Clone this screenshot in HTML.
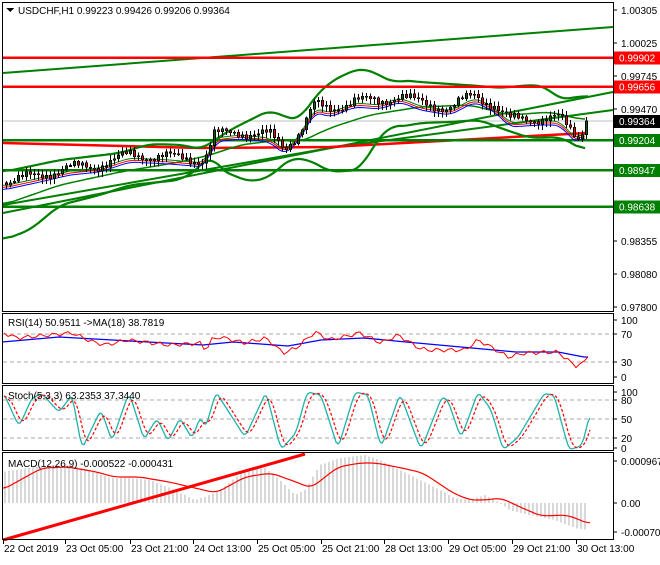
<!DOCTYPE html>
<html><head><meta charset="utf-8">
<style>
body{margin:0;background:#fff;width:660px;height:560px;overflow:hidden;font-family:"Liberation Sans",sans-serif;}
svg text{font-family:"Liberation Sans",sans-serif;font-size:10px;}
</style></head><body>
<svg id="s" width="660" height="560" xmlns="http://www.w3.org/2000/svg" shape-rendering="crispEdges">
<rect width="660" height="560" fill="#fff"/>
<g id="main"></g>
<g fill="none" stroke="#000" stroke-width="1">
<rect x="2.5" y="2.5" width="611" height="309"/>
<rect x="2.5" y="313.5" width="611" height="70"/>
<rect x="2.5" y="385.5" width="611" height="65"/>
<rect x="2.5" y="452.5" width="611" height="87"/>
</g>
<text x="18" y="14" fill="#000">USDCHF,H1  0.99223 0.99426 0.99206 0.99364</text>
<polygon points="6,8 14,8 10,12" fill="#000"/>
<text x="8" y="326">RSI(14) 50.9511  -&gt;MA(18) 38.7819</text>
<text x="8" y="399">Stoch(5,3,3) 63.2353 37.3440</text>
<text x="8" y="467">MACD(12,26,9) -0.000522 -0.000431</text>
<g id="axis"></g>
</svg>
<script>
const NS="http://www.w3.org/2000/svg";
const M=document.getElementById('main'),A=document.getElementById('axis');
function el(p,tag,at){const e=document.createElementNS(NS,tag);for(const k in at)e.setAttribute(k,at[k]);p.appendChild(e);return e;}
function interp(pts,x){if(x<=pts[0][0])return pts[0][1];for(let i=1;i<pts.length;i++){if(x<=pts[i][0]){const a=pts[i-1],b=pts[i];return a[1]+(b[1]-a[1])*(x-a[0])/(b[0]-a[0]);}}return pts[pts.length-1][1];}
function line(pts,st,w,extra){let d=pts.map((p,i)=>(i?'L':'M')+p[0]+','+p[1]).join('');const a={d:d,fill:'none',stroke:st,'stroke-width':w,'shape-rendering':'auto'};Object.assign(a,extra||{});return el(M,'path',a);}
function smooth(pts,step){const r=[];for(let x=pts[0][0];x<=pts[pts.length-1][0];x+=step)r.push([x,+interp(pts,x).toFixed(1)]);return r;}
function soft(pts,step,k){const s=smooth(pts,step);return s.map((p,i)=>{let t=0,n=0;for(let j=i-k;j<=i+k;j++)if(j>=0&&j<s.length){t+=s[j][1];n++;}return [p[0],+(t/n).toFixed(1)];});}
[[334],[362],[400],[419],[438]].forEach(v=>el(M,'line',{x1:3,x2:613,y1:v[0],y2:v[0],stroke:'#aaa','stroke-dasharray':'4,3'}));
el(M,'line',{x1:3,x2:613,y1:121,y2:121,stroke:'#c0c0c0'});
const P=[[3,183],[40,175],[70,168],[100,165],[130,155],[170,157],[205,160],[215,135],[240,132],[270,135],[285,148],[300,132],[315,105],[330,110],[355,100],[380,102],[400,95],[420,103],[450,108],[475,95],[495,105],[510,120],[540,118],[560,118],[570,130],[580,138],[587,120]];
const UP=[[3,172],[60,160],[120,153],[150,144],[185,145],[200,150],[215,140],[230,130],[270,110],[285,117],[300,120],[312,100],[330,82],[350,72],[362,68],[380,75],[395,84],[400,80],[420,82],[450,84],[480,86],[500,88],[530,85],[545,86],[560,100],[575,97],[590,96]];
const LO=[[3,240],[30,230],[60,205],[100,195],[130,185],[180,180],[200,168],[210,152],[220,170],[250,182],[270,177],[290,158],[310,160],[330,172],[360,170],[372,148],[390,125],[400,127],[420,123],[450,122],[480,120],[500,128],[530,138],[560,137],[575,145],[587,152]];
const midPts=soft([[3,205],[60,185],[120,172],[180,162],[210,155],[240,145],[280,140],[300,142],[330,128],[370,115],[420,107],[470,105],[510,115],[550,112],[575,118],[587,120]],3,3);
line([[3,73],[613,27]],'#008000',2);
line([[3,213],[613,92]],'#008000',2);
line([[3,205],[330,148],[613,110]],'#008000',2);
line([[3,143],[200,148],[330,147],[587,133]],'#ff0000',2.5);
line(soft(UP,3,3),'#008000',2.2);line(soft(LO,3,3),'#008000',2.2);line(midPts,'#008000',1.5);
[[57.5,'#ff0000'],[86.5,'#ff0000'],[140,'#008000'],[170,'#008000'],[206.5,'#008000']].forEach(l=>el(M,'line',{x1:3,x2:613,y1:l[0],y2:l[0],stroke:l[1],'stroke-width':2.5}));
const ema=soft(P,3,2).map(p=>[p[0],p[1]+4]);
line(ema.map(p=>[p[0],p[1]-1]),'#008000',1);line(ema.map(p=>[p[0],p[1]+1]),'#ff0000',1);line(ema.map(p=>[p[0],p[1]+3]),'#0000ff',1);
let prev=interp(P,3);
for(let x=5;x<=587;x+=4){
 let c=interp(P,x+2)+Math.sin(x*1.7)*4.5+Math.cos(x*0.9)*2;
 if(x>=583)c=121;
 const o=prev;prev=c;
 const hi=Math.min(o,c)-1-Math.abs(Math.sin(x*3.1))*4,lo=Math.max(o,c)+1+Math.abs(Math.cos(x*2.3))*5;
 const top=Math.min(o,c),h=Math.max(Math.abs(c-o),1);
 el(M,'line',{x1:x+1.5,x2:x+1.5,y1:hi,y2:lo,stroke:'#000'});
 el(M,'rect',{x:x+0.5,y:top,width:2,height:h,fill:c<o?'#006400':'#ff0000',stroke:'#000','stroke-width':0.6});
}
const RSIr=[[4,333],[17,338],[38,336],[72,333],[93,342],[106,345],[127,340],[169,345],[203,343],[205,353],[211,340],[220,337],[245,343],[266,338],[283,353],[296,348],[315,332],[330,340],[360,333],[381,343],[398,335],[419,348],[427,350],[465,350],[478,340],[491,347],[508,357],[525,353],[558,352],[575,366],[586,362],[590,349]];
const RSIr2=smooth(RSIr,4).map((p,i)=>[p[0],p[1]+Math.sin(i*1.9)*2]);
line([[2,342],[59,337],[148,342],[203,345],[233,342],[288,346],[321,340],[364,338],[406,342],[461,347],[516,352],[558,352],[584,357],[588,357]],'#0000ff',1.3);
line(RSIr2,'#ff0000',1);
const ST=[[4,97],[19,40],[32,90],[42,97],[59,65],[72,95],[82,2],[101,70],[112,15],[129,100],[144,18],[157,55],[168,15],[180,55],[192,20],[201,60],[205,35],[216,100],[245,22],[266,100],[281,0],[296,30],[307,100],[321,95],[338,3],[355,100],[368,95],[381,3],[400,97],[421,0],[442,92],[448,85],[461,20],[478,100],[491,70],[503,0],[518,22],[544,97],[554,95],[569,0],[582,8],[590,62]];
const sY=v=>450-v*0.58;
const st=soft(ST,2,1);
line(st.map(p=>[p[0],sY(p[1])]),'#20b2aa',1.3);
const sig=[];for(let i=0;i<st.length;i++){let s=0,n=0;for(let j=i-4;j<=i;j++)if(j>=0){s+=st[j][1];n++;}sig.push([st[i][0],sY(s/n)]);}
line(sig,'#ff0000',1.2,{'stroke-dasharray':'3,2'});
const H=[[3,472],[30,468],[60,464],[90,470],[110,478],[130,478],[150,480],[170,488],[195,500],[205,497],[220,490],[245,470],[265,468],[280,480],[295,495],[305,490],[320,465],[340,458],[365,455],[380,460],[400,470],[420,480],[440,490],[455,498],[470,500],[485,495],[495,500],[510,510],[530,515],[555,520],[575,528],[587,530]];
for(let x=5;x<=587;x+=4){const y=interp(H,x);el(M,'line',{x1:x,x2:x,y1:503,y2:y,stroke:'#b0b0b0'});}
line(soft([[2,490],[42,468],[68,467],[97,472],[114,477],[140,477],[169,482],[195,488],[216,493],[245,477],[271,473],[296,482],[311,488],[338,467],[360,463],[376,463],[402,468],[423,473],[453,493],[470,500],[486,500],[501,498],[520,507],[541,516],[567,515],[590,524]],3,2),'#ff0000',1.2);
line([[3,540],[305,454]],'#ff0000',3);
const L=[[10,'1.00305'],[43,'1.00025'],[76,'0.99745'],[109,'0.99470'],[241,'0.98355'],[274,'0.98080'],[307,'0.97800'],[320,'100'],[334,'70'],[362,'30'],[377,'0'],[392,'100'],[400,'80'],[419,'50'],[438,'20'],[448,'0'],[461,'0.000967'],[503,'0.00'],[532,'-0.000704']];
L.forEach(l=>{el(A,'line',{x1:613,x2:617,y1:l[0],y2:l[0],stroke:'#000'});const t=el(A,'text',{x:621,y:l[0]+4});t.textContent=l[1];});
const B=[[57.5,'0.99902','#ff0000','#fff'],[86.5,'0.99656','#ff0000','#fff'],[121,'0.99364','#000','#fff'],[140,'0.99204','#008000','#fff'],[170,'0.98947','#008000','#fff'],[206.5,'0.98638','#008000','#fff']];
B.forEach(b=>{el(A,'rect',{x:614,y:b[0]-6,width:46,height:13,fill:b[2]});const t=el(A,'text',{x:619,y:b[0]+4,fill:b[3]});t.textContent=b[1];});
const T=[[3,'22 Oct 2019'],[65,'23 Oct 05:00'],[130,'23 Oct 21:00'],[193,'24 Oct 13:00'],[257,'25 Oct 05:00'],[321,'25 Oct 21:00'],[384,'28 Oct 13:00'],[448,'29 Oct 05:00'],[512,'29 Oct 21:00'],[576,'30 Oct 13:00']];
T.forEach(t=>{el(A,'line',{x1:t[0]+0.5,x2:t[0]+0.5,y1:540,y2:544,stroke:'#000'});const e=el(A,'text',{x:t[0]+1,y:552});e.textContent=t[1];});
</script>
</body></html>
